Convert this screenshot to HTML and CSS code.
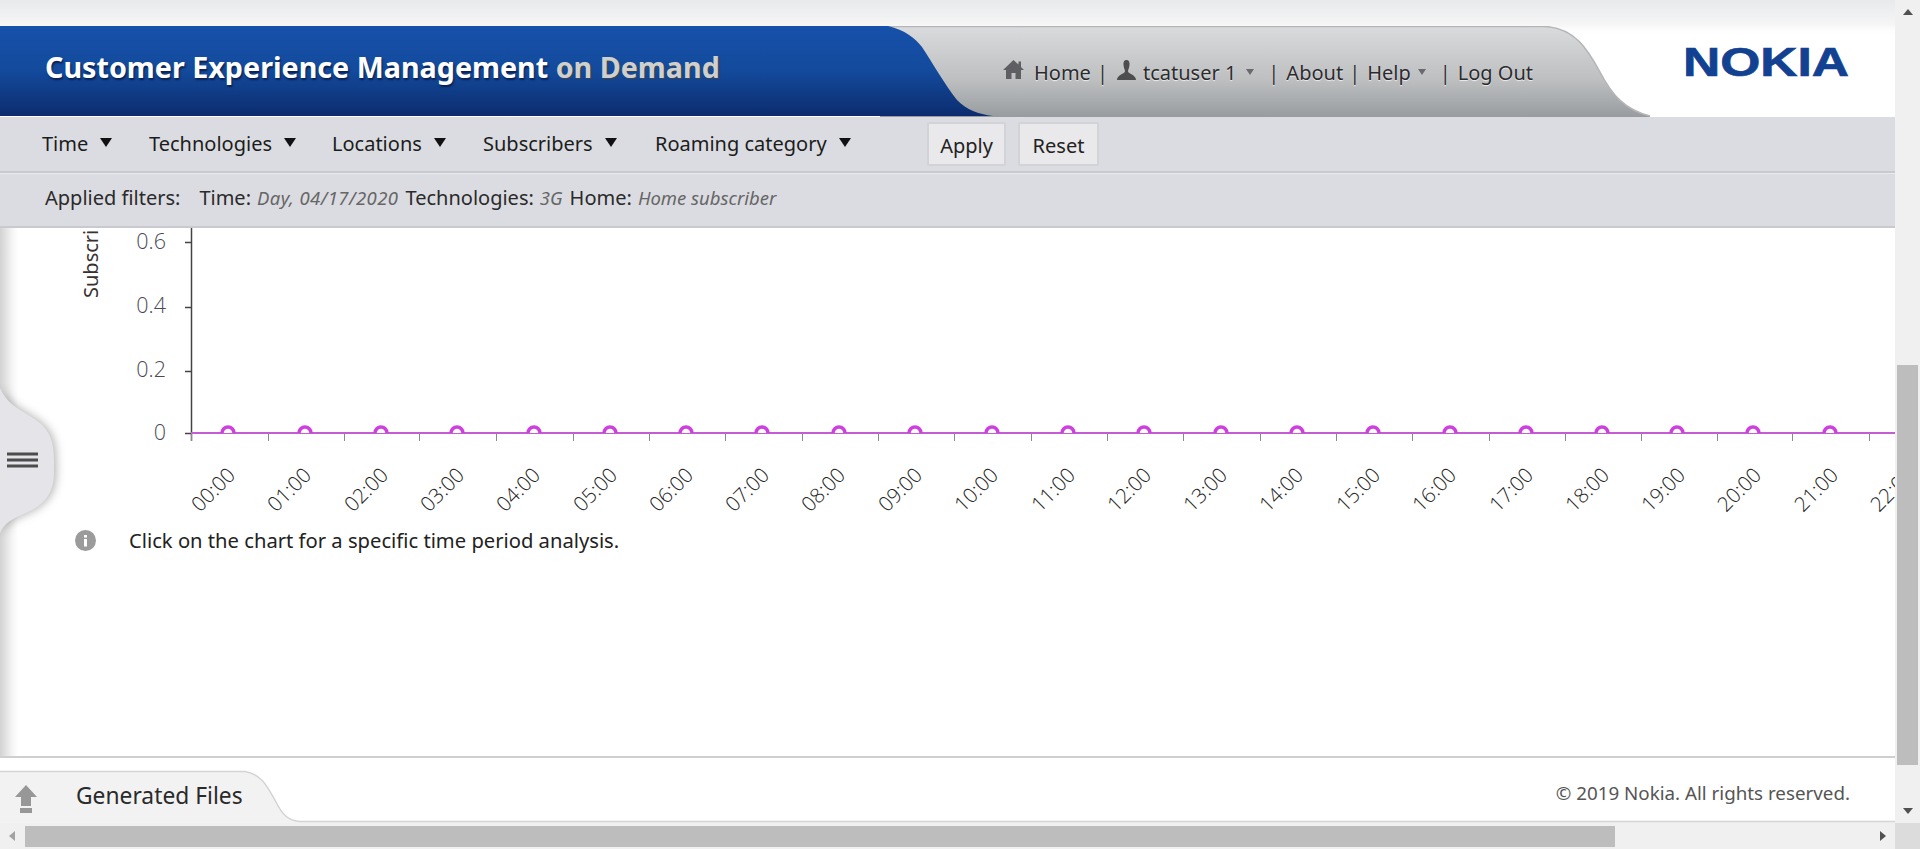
FILE: index.html
```html
<!DOCTYPE html>
<html lang="en">
<head>
<meta charset="UTF-8">
<title>Customer Experience Management on Demand</title>
<link rel="stylesheet" href="styles.css">
</head>
<body>
<div class="page">
  <div class="main">

    <header class="header">
      <svg class="header-bg" width="1895" height="91" viewBox="0 26 1895 91">
        <defs>
          <linearGradient id="blue" x1="0" y1="0" x2="0" y2="1">
            <stop offset="0" stop-color="#1651aa"/>
            <stop offset="0.5" stop-color="#134a9c"/>
            <stop offset="1" stop-color="#0c2c6e"/>
          </linearGradient>
          <linearGradient id="grey" x1="0" y1="0" x2="0" y2="1">
            <stop offset="0" stop-color="#dadbdc"/>
            <stop offset="0.6" stop-color="#bcbec0"/>
            <stop offset="1" stop-color="#989c9e"/>
          </linearGradient>
        </defs>
        <path d="M880 26.5 H1545 C1575 28 1588 50 1600 72 C1612 95 1625 110 1650 116 V117 H880 Z" fill="url(#grey)"/>
        <path d="M880 26.5 H1545 C1575 28 1588 50 1600 72 C1612 95 1625 110 1650 116" fill="none" stroke="#b4b5b6" stroke-width="1.5"/>
        <path d="M0 26 H888 C905 30 915 38 922 47 C932 62 945 85 957 100 C967 110 978 114 993 116 H0 Z" fill="url(#blue)"/>
      </svg>
      <h1 class="title">Customer Experience Management <span class="title-dim">on Demand</span></h1>
      <nav class="top-nav">
        <svg class="ico-home" width="21" height="20" viewBox="0 0 21 20"><path d="M10.5 0 L15.5 4.6 V1.5 H18 V7 L21 10 H18 V19 H12.5 V13 H8.5 V19 H3 V10 H0 Z" fill="#5f5f63"/></svg>
        <span class="nav-home">Home</span>
        <span class="sep">|</span>
        <svg class="ico-user" width="19" height="20" viewBox="0 0 19 20"><path d="M9.5 0 C12 0 12.8 2 12.5 5 C12.3 8 11 9.5 11 11.5 C12 14 19 15 19 20 H0 C0 15 7 14 8 11.5 C8 9.5 6.7 8 6.5 5 C6.2 2 7 0 9.5 0 Z" fill="#4d4d50"/></svg>
        <span class="nav-user">tcatuser 1</span>
        <i class="caret caret-user"></i>
        <span class="sep sep-wide">|</span>
        <span class="nav-about">About</span>
        <span class="sep">|</span>
        <span class="nav-help">Help</span>
        <i class="caret caret-help"></i>
        <span class="sep sep-wide">|</span>
        <span class="nav-logout">Log Out</span>
      </nav>
      <svg class="logo" width="170" height="34" viewBox="0 0 170 34">
        <text x="0" y="30" textLength="166" lengthAdjust="spacingAndGlyphs" class="logo-text">NOKIA</text>
      </svg>
    </header>

    <div class="filter-bar">
      <span class="filter filter-time">Time<i class="arrow"></i></span>
      <span class="filter filter-tech">Technologies<i class="arrow"></i></span>
      <span class="filter filter-loc">Locations<i class="arrow"></i></span>
      <span class="filter filter-sub">Subscribers<i class="arrow"></i></span>
      <span class="filter filter-roam">Roaming category<i class="arrow"></i></span>
      <button class="btn btn-apply">Apply</button>
      <button class="btn">Reset</button>
    </div>

    <div class="applied-bar">
      <span class="applied-label">Applied filters:</span>
      <span>Time:</span><em class="date">Day, 04/17/2020</em>
      <span>Technologies:</span><em>3G</em>
      <span>Home:</span><em>Home subscriber</em>
    </div>

    <div class="content">
      <svg class="chart" width="1895" height="292" viewBox="0 0 1895 292">
        <text class="y-title" transform="translate(98,70) rotate(-90)">Subscribers</text>
        <text class="y-label" x="166" y="21">0.6</text>
        <text class="y-label" x="166" y="85">0.4</text>
        <text class="y-label" x="166" y="149">0.2</text>
        <text class="y-label" x="166" y="212">0</text>
        <path class="axis" d="M191.5 0 V213 M185 14.5 H191 M185 79.5 H191 M185 143.5 H191 M185 205.5 H191"/>
        <path class="axis-x" d="M191 205.5 H1895"/>
        <path class="tick" d="M191.5 206 V213 M268.5 206 V213 M344.5 206 V213 M419.5 206 V213 M496.5 206 V213 M573.5 206 V213 M649.5 206 V213 M725.5 206 V213 M802.5 206 V213 M878.5 206 V213 M954.5 206 V213 M1031.5 206 V213 M1107.5 206 V213 M1183.5 206 V213 M1260.5 206 V213 M1336.5 206 V213 M1412.5 206 V213 M1489.5 206 V213 M1565.5 206 V213 M1641.5 206 V213 M1717.5 206 V213 M1792.5 206 V213 M1869.5 206 V213"/>
        <path class="series" d="M191 205 H1895"/>
        <g class="points">
          <path d="M222 205 A6 6 0 0 1 234 205"/><path d="M299 205 A6 6 0 0 1 311 205"/><path d="M375 205 A6 6 0 0 1 387 205"/><path d="M451 205 A6 6 0 0 1 463 205"/><path d="M528 205 A6 6 0 0 1 540 205"/><path d="M604 205 A6 6 0 0 1 616 205"/><path d="M680 205 A6 6 0 0 1 692 205"/><path d="M756 205 A6 6 0 0 1 768 205"/><path d="M833 205 A6 6 0 0 1 845 205"/><path d="M909 205 A6 6 0 0 1 921 205"/><path d="M986 205 A6 6 0 0 1 998 205"/><path d="M1062 205 A6 6 0 0 1 1074 205"/><path d="M1138 205 A6 6 0 0 1 1150 205"/><path d="M1215 205 A6 6 0 0 1 1227 205"/><path d="M1291 205 A6 6 0 0 1 1303 205"/><path d="M1367 205 A6 6 0 0 1 1379 205"/><path d="M1444 205 A6 6 0 0 1 1456 205"/><path d="M1520 205 A6 6 0 0 1 1532 205"/><path d="M1596 205 A6 6 0 0 1 1608 205"/><path d="M1671 205 A6 6 0 0 1 1683 205"/><path d="M1747 205 A6 6 0 0 1 1759 205"/><path d="M1824 205 A6 6 0 0 1 1836 205"/>
        </g>
        <g class="x-labels">
          <text transform="translate(200,285) rotate(-45)">00:00</text>
          <text transform="translate(276,285) rotate(-45)">01:00</text>
          <text transform="translate(353,285) rotate(-45)">02:00</text>
          <text transform="translate(429,285) rotate(-45)">03:00</text>
          <text transform="translate(505,285) rotate(-45)">04:00</text>
          <text transform="translate(582,285) rotate(-45)">05:00</text>
          <text transform="translate(658,285) rotate(-45)">06:00</text>
          <text transform="translate(734,285) rotate(-45)">07:00</text>
          <text transform="translate(810,285) rotate(-45)">08:00</text>
          <text transform="translate(887,285) rotate(-45)">09:00</text>
          <text transform="translate(963,285) rotate(-45)">10:00</text>
          <text transform="translate(1040,285) rotate(-45)">11:00</text>
          <text transform="translate(1116,285) rotate(-45)">12:00</text>
          <text transform="translate(1192,285) rotate(-45)">13:00</text>
          <text transform="translate(1268,285) rotate(-45)">14:00</text>
          <text transform="translate(1345,285) rotate(-45)">15:00</text>
          <text transform="translate(1421,285) rotate(-45)">16:00</text>
          <text transform="translate(1498,285) rotate(-45)">17:00</text>
          <text transform="translate(1574,285) rotate(-45)">18:00</text>
          <text transform="translate(1650,285) rotate(-45)">19:00</text>
          <text transform="translate(1726,285) rotate(-45)">20:00</text>
          <text transform="translate(1803,285) rotate(-45)">21:00</text>
          <text transform="translate(1879,285) rotate(-45)">22:00</text>
        </g>
      </svg>
      <p class="note">
        <svg class="ico-info" width="21" height="21" viewBox="0 0 21 21"><circle cx="10.5" cy="10.5" r="10.5" fill="#9b9b9b"/><rect x="9" y="9" width="3" height="7.5" fill="#fff"/><rect x="9" y="5" width="3" height="2.6" fill="#fff"/></svg>
        Click on the chart for a specific time period analysis.
      </p>
      <div class="side-handle">
        <svg width="70" height="160" viewBox="0 0 70 160">
          <path class="handle-shape" d="M0 4 C8 22 22 26 36 36 C50 46 54 58 54 76 V88 C54 108 46 118 32 126 C16 134 6 136 0 149 Z"/>
          <path class="handle-bars" d="M7 70 H38 M7 76 H38 M7 82 H38"/>
        </svg>
      </div>
    </div>

    <footer class="footer">
      <svg class="footer-tab" width="1895" height="65" viewBox="0 0 1895 65">
        <path d="M0 14 H245 C262 16 268 30 276 44 C282 56 288 63 300 63.5 H1895 V65 H0 Z" fill="#f2f2f2"/>
        <path d="M0 13.5 H245 C262 16 268 30 276 44 C282 56 288 63 300 63.5 H1895" fill="none" stroke="#d4d4d4" stroke-width="1.5"/>
      </svg>
      <svg class="ico-up" width="22" height="28" viewBox="0 0 22 28"><path d="M11 0 L22 12 H16 V21 H6 V12 H0 Z M5 23 H17 V28 H5 Z" fill="#979797"/></svg>
      <span class="files-label">Generated Files</span>
      <span class="copyright">© 2019 Nokia. All rights reserved.</span>
    </footer>
  </div>

  <div class="vscroll">
    <i class="sb-arrow sb-up"></i>
    <div class="vthumb"></div>
    <i class="sb-arrow sb-down"></i>
  </div>
  <div class="hscroll">
    <i class="sb-arrow sb-left"></i>
    <div class="hthumb"></div>
    <i class="sb-arrow sb-right"></i>
  </div>
  <div class="corner"></div>
</div>
</body>
</html>
```

FILE: styles.css
```css
* {
  box-sizing: border-box;
}
html, body {
  margin: 0;
  padding: 0;
  overflow: hidden;
}
body {
  font-family: "Noto Sans", "Open Sans", sans-serif;
  color: #222;
  background: #fff;
}
.page {
  width: 1920px;
  height: 849px;
  display: grid;
  grid-template-columns: 1895px 25px;
  grid-template-rows: 823px 26px;
}
.main {
  display: flex;
  flex-direction: column;
  min-height: 0;
  overflow: hidden;
}

/* header */
.header {
  position: relative;
  flex: none;
  height: 117px;
  padding-top: 26px;
  display: flex;
  background: linear-gradient(#e9eaec 1px, #eaebed 4px, #f5f5f6 24px, #fdfdfd 30px, #fff 36px);
}
.header-bg {
  position: absolute;
  left: 0;
  top: 26px;
}
.title {
  position: relative;
  flex: none;
  width: 1003px;
  margin: 0;
  padding: 21px 0 0 45px;
  font-size: 28.7px;
  line-height: 40px;
  font-weight: 700;
  color: #fff;
  text-shadow: 1px 2px 2px #0a1f4d;
  white-space: nowrap;
}
.title-dim {
  color: #cfcfcf;
  text-shadow: 1px 1px 1px #444;
}
.top-nav {
  position: relative;
  flex: none;
  display: flex;
  align-items: center;
  height: 92px;
  font-size: 20px;
  color: #2b2b2e;
  text-shadow: 0 1px 1px #eee;
  white-space: nowrap;
}
.ico-home {
  margin-top: -5px;
}
.nav-home {
  margin-left: 10px;
}
.sep {
  margin: 0 7px 0 6px;
  color: #333;
}
.ico-user {
  margin: -5px 0 0 2px;
}
.nav-user {
  margin-left: 7px;
}
.caret {
  width: 0;
  height: 0;
  border-left: 4px solid transparent;
  border-right: 4px solid transparent;
  border-top: 6px solid #6a6a6e;
}
.caret-user {
  margin-left: 10px;
}
.caret-help {
  margin-left: 7px;
}
.sep-wide {
  margin-left: 14px;
}
.logo {
  position: absolute;
  left: 1683px;
  top: 46px;
}
.logo-text {
  font-family: "Liberation Sans", sans-serif;
  font-weight: 700;
  font-size: 41px;
  fill: #124191;
  stroke: #124191;
  stroke-width: 0.7;
}

/* filter bars */
.filter-bar {
  flex: none;
  height: 56px;
  display: flex;
  align-items: center;
  padding-left: 42px;
  background: #dbdce1;
  border-bottom: 2px solid #c9cacf;
  font-size: 20px;
  color: #1c1c1c;
  white-space: nowrap;
}
.filter {
  flex: none;
  margin-top: -2px;
}
.filter-time { width: 107px; }
.filter-tech { width: 183px; }
.filter-loc { width: 151px; }
.filter-sub { width: 172px; }
.filter-roam { width: 272px; }
.arrow {
  display: inline-block;
  width: 0;
  height: 0;
  margin-left: 12px;
  vertical-align: 4px;
  border-left: 6px solid transparent;
  border-right: 6px solid transparent;
  border-top: 9px solid #111;
}
.btn {
  width: 79px;
  height: 44px;
  margin-right: 12px;
  padding: 2px 0 0;
  font-family: inherit;
  font-size: 20px;
  color: #222;
  background: #e9e8ea;
  border: 2px solid #d2d3d7;
  border-radius: 2px;
}
.btn + .btn {
  width: 81px;
}
.applied-bar {
  flex: none;
  height: 55px;
  display: flex;
  align-items: center;
  padding: 0 0 6px 45px;
  background: #dbdce1;
  border-top: 1px solid #e9eaed;
  border-bottom: 2px solid #c9cacf;
  font-size: 20px;
  color: #2a2a2a;
  white-space: nowrap;
}
.applied-label {
  margin-right: 19px;
}
.applied-bar em {
  margin: 1px 7px 0 6px;
  font-size: 18.5px;
  color: #666;
}
.applied-bar .date {
  letter-spacing: 0.43px;
}

/* chart area */
.content {
  position: relative;
  flex: 1;
  min-height: 0;
  border-bottom: 2px solid #cfcfcf;
  background: linear-gradient(90deg, #d2d2d2, #f4f4f4 12px, #fff 18px);
}
.chart {
  display: block;
}
.y-title {
  font-size: 20px;
  fill: #3a3030;
}
.y-label {
  font-family: "Open Sans", sans-serif;
  font-weight: 300;
  font-size: 21.5px;
  text-anchor: end;
  fill: #4a4a55;
}
.axis {
  fill: none;
  stroke: #444;
  stroke-width: 1.5;
}
.axis-x {
  fill: none;
  stroke: #888;
  stroke-width: 1;
}
.tick {
  fill: none;
  stroke: #8a8a8a;
  stroke-width: 1;
}
.series {
  fill: none;
  stroke: #c45cd4;
  stroke-width: 2;
}
.points path {
  fill: #fff;
  stroke: #cf3fdf;
  stroke-width: 3.5;
}
.x-labels text {
  font-family: "Open Sans", sans-serif;
  font-weight: 300;
  font-size: 20.5px;
  fill: #222;
}
.note {
  display: flex;
  align-items: center;
  margin: 0;
  padding: 6px 0 0 75px;
  font-size: 20.2px;
  color: #222;
}
.ico-info {
  margin-right: 33px;
}
.side-handle {
  position: absolute;
  left: 0;
  top: 156px;
}
.handle-shape {
  fill: #e5e5e9;
  stroke: none;
  filter: drop-shadow(2px 0 5px rgba(0, 0, 0, 0.3));
}
.handle-bars {
  fill: none;
  stroke: #4c4c4c;
  stroke-width: 3;
}

/* footer */
.footer {
  position: relative;
  flex: none;
  height: 65px;
  display: flex;
  align-items: center;
}
.footer-tab {
  position: absolute;
  left: 0;
  top: 0;
}
.ico-up {
  position: relative;
  flex: none;
  margin: 16px 0 0 15px;
}
.files-label {
  position: relative;
  margin: 10px 0 0 39px;
  font-size: 22.8px;
  color: #2a2a2a;
}
.copyright {
  position: relative;
  margin: 4px 45px 0 auto;
  font-size: 18.8px;
  color: #555;
}

/* scrollbars */
.vscroll, .hscroll {
  background: #f0f0f0;
  display: flex;
  align-items: center;
}
.vscroll {
  flex-direction: column;
  padding: 9px 0 9px;
}
.vthumb {
  flex: none;
  width: 21px;
  height: 400px;
  margin: 350px 0 43px;
  background: #bdbdbd;
}
.hscroll {
  padding: 0 9px;
}
.hthumb {
  width: 1590px;
  height: 21px;
  margin-left: 10px;
  background: #bdbdbd;
}
.corner {
  background: #dcdcdc;
}
.sb-arrow {
  flex: none;
  width: 0;
  height: 0;
  display: block;
}
.sb-up {
  border-left: 5px solid transparent;
  border-right: 5px solid transparent;
  border-bottom: 6px solid #505050;
}
.sb-down {
  border-left: 5px solid transparent;
  border-right: 5px solid transparent;
  border-top: 6px solid #505050;
}
.sb-left {
  border-top: 5px solid transparent;
  border-bottom: 5px solid transparent;
  border-right: 6px solid #a3a3a3;
}
.sb-right {
  margin-left: auto;
  border-top: 5px solid transparent;
  border-bottom: 5px solid transparent;
  border-left: 6px solid #505050;
}
```
